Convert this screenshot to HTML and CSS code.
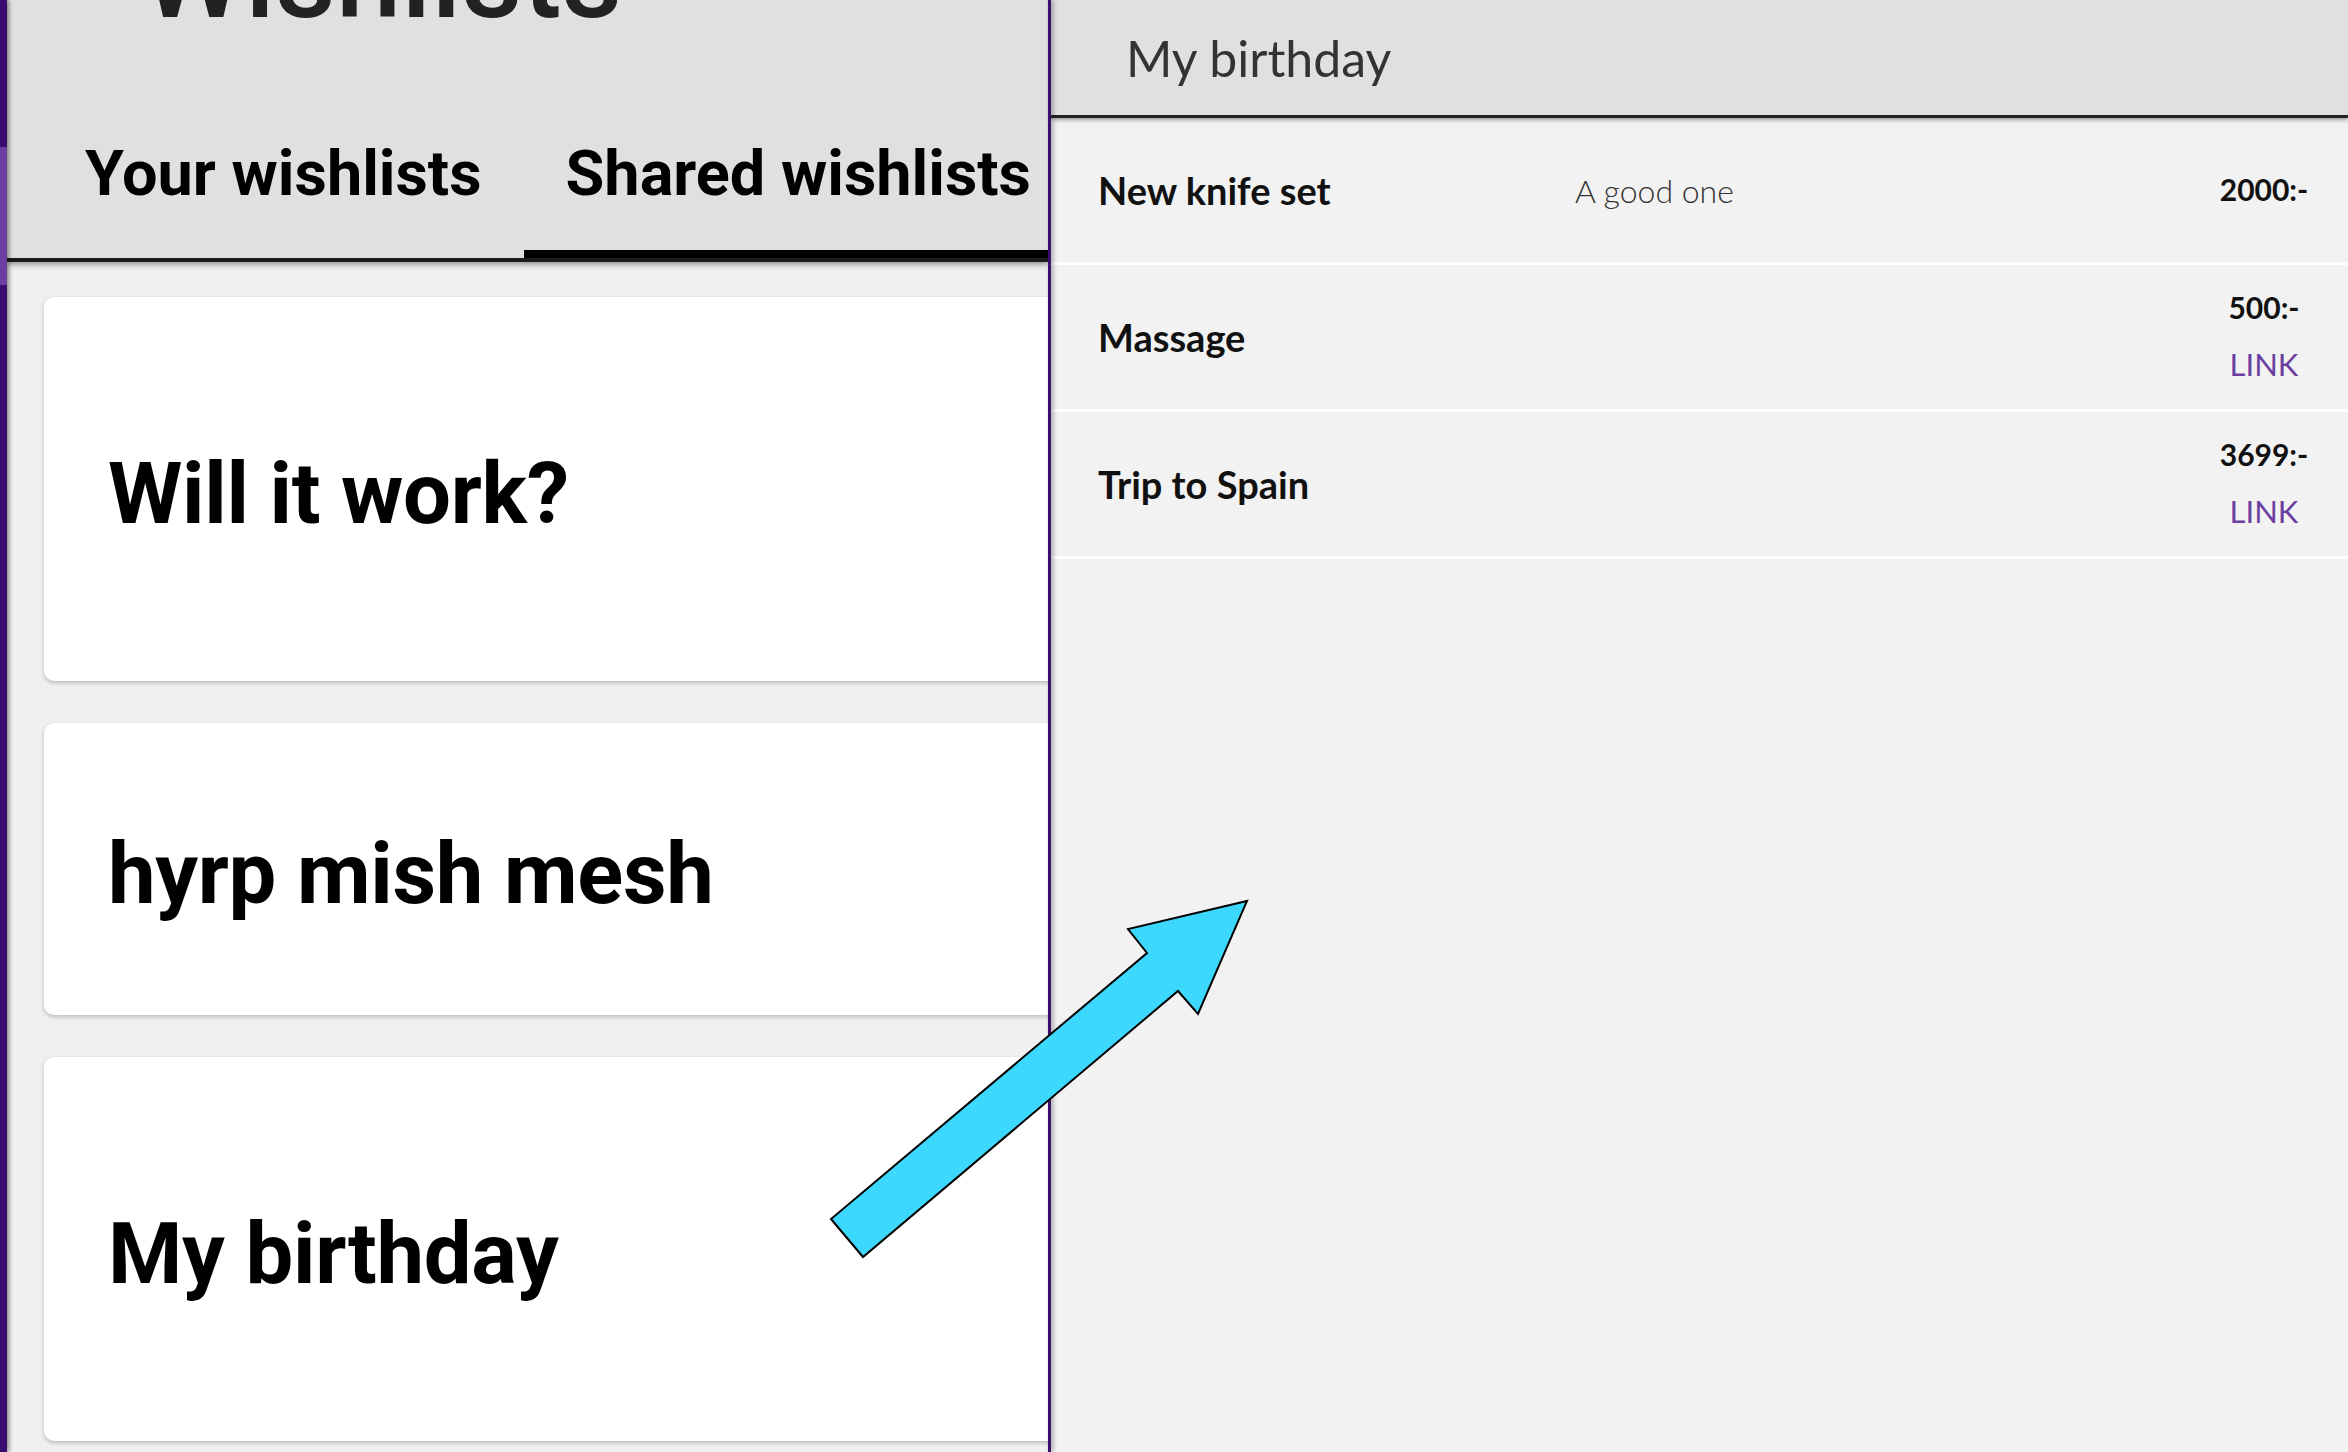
FILE: index.html
```html
<!DOCTYPE html>
<html lang="en">
<head>
<meta charset="utf-8">
<title>Wishlists</title>
<link rel="stylesheet" href="styles.css">
</head>
<body>
<div class="app">
  <div class="rail"></div>
  <section class="lists">
    <header class="lists-head">
      <h1 class="lists-title">Wishlists</h1>
      <nav class="tabs">
        <div class="tab">Your wishlists</div>
        <div class="tab active">Shared wishlists</div>
      </nav>
    </header>
    <div class="cards">
      <div class="card">Will it work?</div>
      <div class="card short">hyrp mish mesh</div>
      <div class="card">My birthday</div>
    </div>
  </section>
  <div class="divider"></div>
  <section class="detail">
    <header class="detail-head">My birthday</header>
    <div class="item">
      <div class="item-name">New knife set</div>
      <div class="item-desc">A good one</div>
      <div class="item-meta"><span class="price">2000:-</span></div>
    </div>
    <div class="item">
      <div class="item-name">Massage</div>
      <div class="item-desc"></div>
      <div class="item-meta"><span class="price">500:-</span><a class="link" href="#">LINK</a></div>
    </div>
    <div class="item">
      <div class="item-name">Trip to Spain</div>
      <div class="item-desc"></div>
      <div class="item-meta"><span class="price">3699:-</span><a class="link" href="#">LINK</a></div>
    </div>
  </section>
  <svg class="arrow" viewBox="0 0 2348 1452" width="2348" height="1452" aria-hidden="true">
    <polygon points="831,1219 863,1257 1178,991 1198,1014 1247,901 1128,929 1147,953" fill="#3dd8fd" stroke="#000" stroke-width="2" stroke-linejoin="miter"/>
  </svg>
</div>
</body>
</html>
```

FILE: styles.css
```css
* { box-sizing: border-box; }

body {
  margin: 0;
  font-family: Roboto, "Liberation Sans", sans-serif;
}

.app {
  position: relative;
  display: flex;
  width: 2348px;
  height: 1452px;
  overflow: hidden;
  background: #f2f2f2;
}

.rail {
  flex: none;
  width: 7px;
  background: linear-gradient(to bottom, #3a0c6e 0 147px, #6b3fa0 147px 285px, #3a0c6e 285px);
  box-shadow: 2px 0 4px rgba(0, 0, 0, 0.45);
  z-index: 3;
}

.lists {
  flex: none;
  width: 1041px;
  display: flex;
  flex-direction: column;
  background: #f0f0f0;
  overflow: hidden;
}

.lists-head {
  position: relative;
  z-index: 1;
  flex: none;
  height: 262px;
  display: flex;
  flex-direction: column;
  justify-content: space-between;
  background: #e0e0e0;
  border-bottom: 4px solid #1c1c1c;
  box-shadow: 0 3px 5px rgba(0, 0, 0, 0.35);
  overflow: hidden;
}

.lists-title {
  margin: -82px 0 0 134px;
  font-family: Roboto, sans-serif;
  font-weight: 500;
  font-size: 118px;
  line-height: 1;
  color: #222;
}

.tabs {
  display: flex;
  height: 166px;
  padding-left: 36px;
}

.tab {
  flex: none;
  display: flex;
  align-items: center;
  padding: 5px 42px 0;
  border-bottom: 8px solid transparent;
  font-family: Roboto, sans-serif;
  font-weight: 700;
  font-size: 63px;
  color: #000;
  white-space: nowrap;
}

.tab.active {
  border-bottom-color: #000;
}

.cards {
  display: flex;
  flex-direction: column;
  gap: 42px;
  padding: 35px 0 0 37px;
  margin-right: -60px;
}

.card {
  flex: none;
  height: 384px;
  display: flex;
  align-items: center;
  padding: 10px 0 0 64px;
  background: #fff;
  border-radius: 10px;
  box-shadow: 0 2px 4px rgba(0, 0, 0, 0.22);
  font-family: Roboto, sans-serif;
  font-weight: 700;
  font-size: 85px;
  letter-spacing: -0.3px;
  color: #000;
}

.card.short {
  height: 292px;
}

.divider {
  flex: none;
  width: 3px;
  background: #3b0f70;
  box-shadow: 2px 0 4px rgba(0, 0, 0, 0.4);
  z-index: 3;
}

.detail {
  flex: 1;
  display: flex;
  flex-direction: column;
  background: #f2f2f2;
  font-family: Lato, "Open Sans", sans-serif;
}

.detail-head {
  position: relative;
  z-index: 1;
  flex: none;
  height: 118px;
  display: flex;
  align-items: center;
  padding-left: 75px;
  background: #e0e0e0;
  border-bottom: 3px solid #222;
  box-shadow: 0 2px 4px rgba(0, 0, 0, 0.35);
  font-size: 50px;
  color: #333;
}

.item {
  display: grid;
  grid-template-columns: 477px 1fr 110px;
  align-items: center;
  height: 147px;
  padding: 0 29px 0 47px;
  border-bottom: 3px solid #fff;
}

.item-name {
  font-weight: 700;
  font-size: 38px;
  color: #111;
}

.item-desc {
  font-weight: 300;
  font-size: 32px;
  color: #333;
}

.item-meta {
  display: flex;
  flex-direction: column;
  align-items: center;
  gap: 21px;
  margin-top: -3px;
}

.price {
  font-weight: 700;
  font-size: 30px;
  line-height: 36px;
  color: #111;
}

.link {
  font-size: 31px;
  line-height: 36px;
  color: #6b3fa0;
  text-decoration: none;
}

.arrow {
  position: absolute;
  top: 0;
  left: 0;
  z-index: 5;
  pointer-events: none;
}
```
